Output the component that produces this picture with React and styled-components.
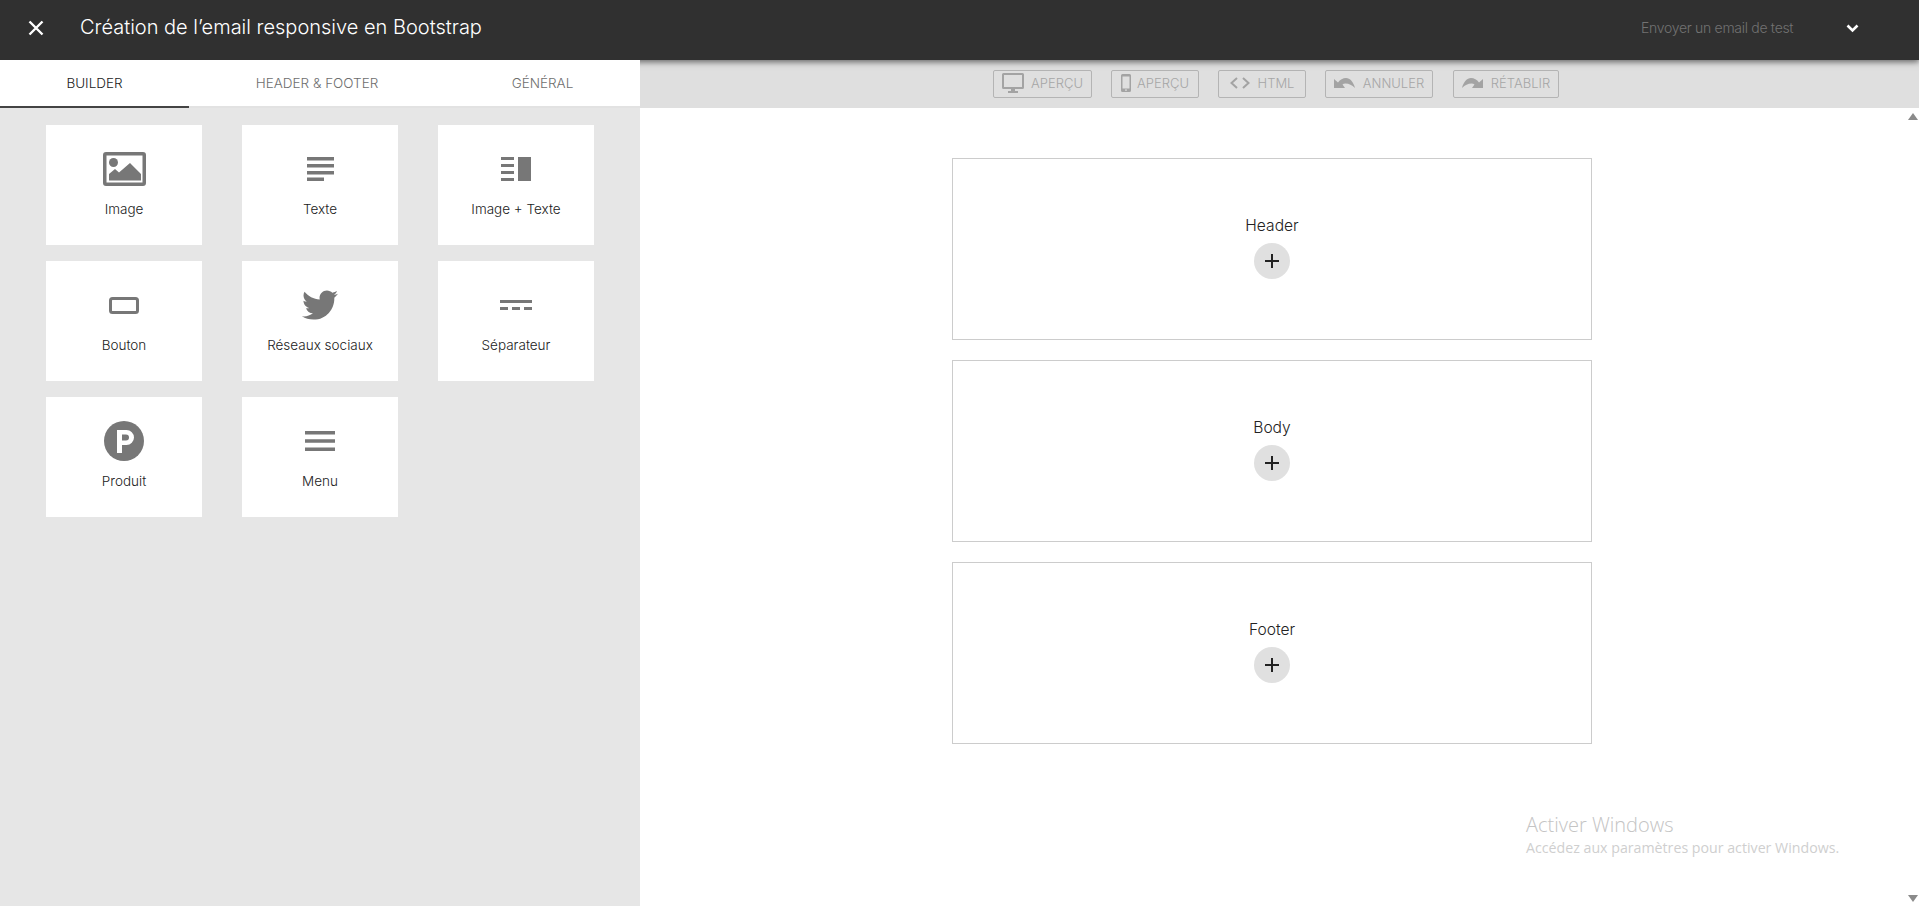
import React from "react";
import styled, { createGlobalStyle } from "styled-components";
import { FaTwitter } from "react-icons/fa";

const GlobalStyle = createGlobalStyle`
  html, body {
    margin: 0;
    height: 100%;
    overflow: hidden;
    background: #fff;
    font-family: "Inter", "Liberation Sans", sans-serif;
    font-weight: 300;
  }
  * {
    box-sizing: border-box;
  }
`;

const Page = styled.div`
  position: relative;
  display: flex;
  flex-direction: column;
  height: 906px;
`;

const TopBar = styled.header`
  position: relative;
  z-index: 1;
  display: flex;
  align-items: center;
  flex: 0 0 60px;
  padding: 0 60px 5px 28px;
  background: #303030;
  box-shadow: 0 2px 6px rgba(0, 0, 0, 0.55);
`;

const CloseButton = styled.svg`
  width: 16px;
  height: 16px;
  margin-right: 36px;
`;

const Title = styled.h1`
  flex: 1;
  margin: 0 0 1px;
  color: #fff;
  font-size: 20px;
  font-weight: 300;
`;

const TestMail = styled.span`
  width: 205px;
  color: #727272;
  font-size: 14px;
  letter-spacing: -0.3px;
`;

const Chevron = styled.svg`
  width: 13px;
  height: 9px;
  margin-top: 2px;
`;

const Body = styled.div`
  display: flex;
  flex: 1;
  min-height: 0;
`;

const Sidebar = styled.aside`
  position: relative;
  z-index: 2;
  flex: 0 0 640px;
  background: #e6e6e6;
`;

const Tabs = styled.nav`
  display: grid;
  grid-template-columns: 189px 256px 195px;
  height: 48px;
  background: #fff;
  border-bottom: 2px solid #e2e2e2;
`;

const Tab = styled.div`
  height: 48px;
  border-bottom: 2px solid ${({ $active }) => ($active ? "#444" : "transparent")};
  color: ${({ $active }) => ($active ? "#222" : "#6e6e6e")};
  font-size: 13.5px;
  line-height: 47px;
  text-align: center;
`;

const Palette = styled.div`
  display: grid;
  grid-template-columns: repeat(3, 156px);
  grid-auto-rows: 120px;
  gap: 16px 40px;
  padding: 17px 0 0 46px;
`;

const Card = styled.div`
  display: flex;
  flex-direction: column;
  align-items: center;
  background: #fff;
`;

const IconSlot = styled.div`
  display: flex;
  align-items: center;
  justify-content: center;
  height: 48px;
  margin: 20px 0 7px;
  color: #777;
`;

const CardLabel = styled.span`
  color: #222;
  font-size: 13.5px;
  line-height: 18px;
`;

const Main = styled.main`
  display: flex;
  flex: 1;
  flex-direction: column;
  min-width: 0;
`;

const Toolbar = styled.div`
  display: flex;
  flex: 0 0 48px;
  align-items: center;
  padding-left: 353px;
  background: #dfdfdf;
`;

const ToolButton = styled.div`
  display: flex;
  align-items: center;
  justify-content: center;
  gap: ${({ $gap }) => $gap}px;
  width: ${({ $width }) => $width}px;
  height: 28px;
  margin-right: ${({ $after }) => $after}px;
  padding-bottom: 2px;
  border: 1px solid #b4b4b4;
  border-radius: 2px;
  color: #a6a6a6;
  font-size: 13px;

  svg {
    flex: none;
    color: #a3a3a3;
  }
`;

const Canvas = styled.div`
  display: flex;
  flex: 1;
  min-height: 0;
`;

const Stage = styled.div`
  display: flex;
  flex: 1;
  flex-direction: column;
  align-items: center;
  gap: 20px;
  padding-top: 50px;
`;

const Zone = styled.section`
  display: flex;
  flex-direction: column;
  align-items: center;
  width: 640px;
  height: 182px;
  padding-top: 56.5px;
  border: 1px solid #ccc;
`;

const ZoneLabel = styled.span`
  margin-bottom: 7.5px;
  color: #222;
  font-size: 15.6px;
  line-height: 20px;
`;

const AddButton = styled.div`
  display: flex;
  align-items: center;
  justify-content: center;
  width: 36px;
  height: 36px;
  border-radius: 50%;
  background: #e0e0e0;
`;

const ScrollRail = styled.div`
  display: flex;
  flex: 0 0 15px;
  flex-direction: column;
  align-items: center;
  justify-content: space-between;
  padding: 5px 0 4px 2px;
`;

const Arrow = styled.i`
  width: 0;
  height: 0;
  border-left: 5px solid transparent;
  border-right: 5px solid transparent;
  border-${({ $up }) => ($up ? "bottom" : "top")}: 7px solid #8a8a8a;
`;

const Watermark = styled.div`
  position: absolute;
  left: 1526px;
  top: 811px;
  color: #c4c4c4;
  font-family: "Open Sans", "Noto Sans", sans-serif;
  pointer-events: none;
`;

const WatermarkTitle = styled.div`
  font-size: 20px;
  font-weight: 300;
  line-height: 27px;
`;

const WatermarkText = styled.div`
  font-size: 14.2px;
  font-weight: 400;
  line-height: 19px;
  color: #cfcfcf;
`;

const ImageIcon = () => (
  <svg width="43" height="34" viewBox="0 0 43 34" fill="currentColor">
    <path fillRule="evenodd" d="M3 0h37a3 3 0 0 1 3 3v28a3 3 0 0 1-3 3H3a3 3 0 0 1-3-3V3a3 3 0 0 1 3-3zm.500 3.500v27h36v-27z" />
    <circle cx="10.500" cy="10.500" r="4.500" />
    <path d="M6 28.500V22l6-5 4 3.500L27 11l11 11v6.500z" />
  </svg>
);

const TextIcon = () => (
  <svg width="27" height="24" viewBox="0 0 27 24" fill="currentColor">
    <path d="M0 0h27v3.500H0zM0 7h27v3.500H0zM0 14h27v3.500H0zM0 20.500h17V24H0z" />
  </svg>
);

const ImageTextIcon = () => (
  <svg width="30" height="24" viewBox="0 0 30 24" fill="currentColor">
    <path d="M0 0h13v3H0zM0 7h13v3H0zM0 14h13v3H0zM0 21h13v3H0zM17 0h13v24H17z" />
  </svg>
);

const ButtonIcon = () => (
  <svg width="30" height="17" viewBox="0 0 30 17" fill="none" stroke="currentColor" strokeWidth="3">
    <rect x="1.500" y="1.500" width="27" height="14" rx="2" />
  </svg>
);

const SeparatorIcon = () => (
  <svg width="32" height="10" viewBox="0 0 32 10" fill="currentColor">
    <path d="M0 0h32v3H0zM0 7h8v3H0zM12 7h8v3h-8zM24 7h8v3h-8z" />
  </svg>
);

const ProductIcon = () => (
  <svg width="40" height="40" viewBox="0 0 40 40">
    <circle cx="20" cy="20" r="20" fill="currentColor" />
    <path fill="#fff" fillRule="evenodd" d="M13 9h9.500a7.500 7.500 0 0 1 0 15H18v8h-5zm5 4.500v6h4a3 3 0 0 0 0-6z" />
  </svg>
);

const MenuIcon = () => (
  <svg width="30" height="20" viewBox="0 0 30 20" fill="currentColor">
    <path d="M0 0h30v3.500H0zM0 8.300h30v3.500H0zM0 16.500h30V20H0z" />
  </svg>
);

const MonitorIcon = () => (
  <svg width="22" height="20" viewBox="0 0 22 20" fill="currentColor">
    <path fillRule="evenodd" d="M1.500 0h19A1.500 1.500 0 0 1 22 1.500v13a1.500 1.500 0 0 1-1.500 1.500h-19A1.500 1.500 0 0 1 0 14.500v-13A1.500 1.500 0 0 1 1.500 0zM2 2v12h18V2z" />
    <path d="M9 16h4v2h3v2H6v-2h3z" />
  </svg>
);

const PhoneIcon = () => (
  <svg width="10" height="18" viewBox="0 0 10 18" fill="currentColor">
    <path fillRule="evenodd" d="M1.500 0h7A1.500 1.500 0 0 1 10 1.500v15A1.500 1.500 0 0 1 8.500 18h-7A1.500 1.500 0 0 1 0 16.500v-15A1.500 1.500 0 0 1 1.500 0zM1.500 2.500v12h7v-12zM5 15.200a.9.9 0 1 0 0 1.800.9.9 0 0 0 0-1.800z" />
  </svg>
);

const CodeIcon = () => (
  <svg width="20" height="12" viewBox="0 0 20 12" fill="none" stroke="currentColor" strokeWidth="2">
    <path d="M7 1 1.500 6 7 11M13 1l5.500 5L13 11" />
  </svg>
);

const UndoIcon = ({ flip }) => (
  <svg width="21" height="10" viewBox="0 0 21 10" fill="currentColor" style={flip ? { transform: "scaleX(-1)" } : undefined}>
    <path d="M0 1 4 4.500C6 1.500 9 0 12 0c4 0 7.500 4 9 10-3-3-6-4.500-9.500-4.500-1.300 0-2.300.3-3 1L11 10H0z" />
  </svg>
);

const items = [
  ["Image", <ImageIcon />],
  ["Texte", <TextIcon />],
  ["Image + Texte", <ImageTextIcon />],
  ["Bouton", <ButtonIcon />],
  ["Réseaux sociaux", <FaTwitter size={36} />],
  ["Séparateur", <SeparatorIcon />],
  ["Produit", <ProductIcon />],
  ["Menu", <MenuIcon />],
];

const tools = [
  { label: "APERÇU", width: 99, after: 19, gap: 7, icon: <MonitorIcon /> },
  { label: "APERÇU", width: 88, after: 19, gap: 6, icon: <PhoneIcon /> },
  { label: "HTML", width: 88, after: 19, gap: 8, icon: <CodeIcon /> },
  { label: "ANNULER", width: 108, after: 20, gap: 8, icon: <UndoIcon /> },
  { label: "RÉTABLIR", width: 106, after: 0, gap: 8, icon: <UndoIcon flip /> },
];

const zones = ["Header", "Body", "Footer"];

export default function App() {
  return (
    <Page>
      <GlobalStyle />
      <TopBar>
        <CloseButton viewBox="0 0 16 16" fill="none" stroke="#fff" strokeWidth="2.400">
          <path d="M1.500 1.500l13 13M14.500 1.500l-13 13" />
        </CloseButton>
        <Title>Création de l’email responsive en Bootstrap</Title>
        <TestMail>Envoyer un email de test</TestMail>
        <Chevron viewBox="0 0 13 9" fill="none" stroke="#fff" strokeWidth="2.600">
          <path d="M1.500 1.500 6.500 6.500l5-5" />
        </Chevron>
      </TopBar>
      <Body>
        <Sidebar>
          <Tabs>
            <Tab $active>BUILDER</Tab>
            <Tab>HEADER &amp; FOOTER</Tab>
            <Tab>GÉNÉRAL</Tab>
          </Tabs>
          <Palette>
            {items.map(([label, icon]) => (
              <Card key={label}>
                <IconSlot>{icon}</IconSlot>
                <CardLabel>{label}</CardLabel>
              </Card>
            ))}
          </Palette>
        </Sidebar>
        <Main>
          <Toolbar>
            {tools.map((tool) => (
              <ToolButton key={tool.label + tool.width} $width={tool.width} $after={tool.after} $gap={tool.gap}>
                {tool.icon}
                {tool.label}
              </ToolButton>
            ))}
          </Toolbar>
          <Canvas>
            <Stage>
              {zones.map((zone) => (
                <Zone key={zone}>
                  <ZoneLabel>{zone}</ZoneLabel>
                  <AddButton>
                    <svg width="16" height="16" viewBox="0 0 16 16" stroke="#222" strokeWidth="2">
                      <path d="M8 1v14M1 8h14" />
                    </svg>
                  </AddButton>
                </Zone>
              ))}
            </Stage>
            <ScrollRail>
              <Arrow $up />
              <Arrow />
            </ScrollRail>
          </Canvas>
        </Main>
      </Body>
      <Watermark>
        <WatermarkTitle>Activer Windows</WatermarkTitle>
        <WatermarkText>Accédez aux paramètres pour activer Windows.</WatermarkText>
      </Watermark>
    </Page>
  );
}
